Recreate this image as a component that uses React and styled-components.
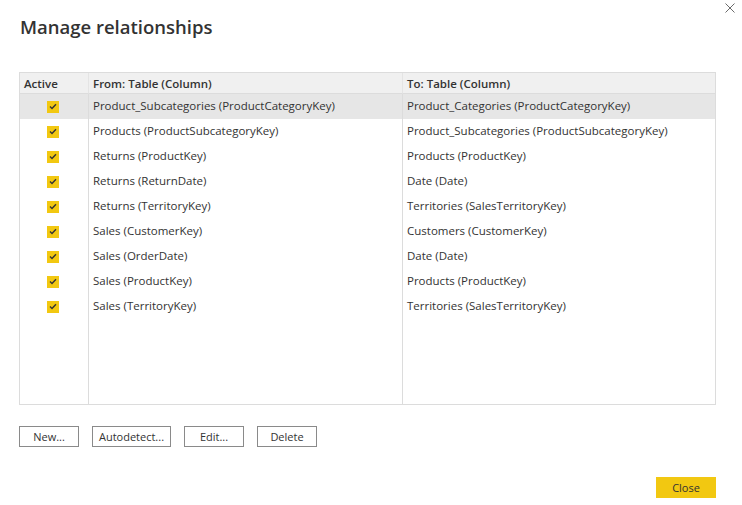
import React from "react";
import styled, { createGlobalStyle } from "styled-components";

const GlobalStyle = createGlobalStyle`
  html, body {
    margin: 0;
    padding: 0;
    background: #ffffff;
  }
  body {
    font-family: "Open Sans", "Noto Sans", sans-serif;
    color: #333333;
  }
`;

const relationships = [
  { from: "Product_Subcategories (ProductCategoryKey)", to: "Product_Categories (ProductCategoryKey)", selected: true },
  { from: "Products (ProductSubcategoryKey)", to: "Product_Subcategories (ProductSubcategoryKey)" },
  { from: "Returns (ProductKey)", to: "Products (ProductKey)" },
  { from: "Returns (ReturnDate)", to: "Date (Date)" },
  { from: "Returns (TerritoryKey)", to: "Territories (SalesTerritoryKey)" },
  { from: "Sales (CustomerKey)", to: "Customers (CustomerKey)" },
  { from: "Sales (OrderDate)", to: "Date (Date)" },
  { from: "Sales (ProductKey)", to: "Products (ProductKey)" },
  { from: "Sales (TerritoryKey)", to: "Territories (SalesTerritoryKey)" },
];

const Dialog = styled.div`
  position: relative;
  width: 742px;
  height: 505px;
  box-sizing: border-box;
  padding: 14px 26px 0 19px;
  display: flex;
  flex-direction: column;
`;

const CloseX = styled.button`
  position: absolute;
  top: 1px;
  right: 5px;
  width: 14px;
  height: 14px;
  padding: 0;
  border: none;
  background: none;
  display: flex;
  align-items: center;
  justify-content: center;
`;

const Title = styled.h1`
  margin: 0 0 0 1px;
  font-size: 18.5px;
  font-weight: 600;
  line-height: 26px;
  color: #333333;
`;

const Grid = styled.div`
  margin-top: 32px;
  height: 333px;
  box-sizing: border-box;
  border: 1px solid #dcdcdc;
  display: grid;
  grid-template-columns: 68px 314px 1fr;
  grid-template-rows: 21px repeat(9, 25px) 1fr;
  font-size: 11.5px;
`;

const HeadCell = styled.div`
  background: #f0f0f0;
  border-bottom: 1px solid #dcdcdc;
  border-left: ${({ $first }) => ($first ? "none" : "1px solid #e4e4e4")};
  font-weight: 600;
  display: flex;
  align-items: center;
  padding-left: 4px;
  color: #333333;
`;

const Cell = styled.div`
  background: ${({ $selected }) => ($selected ? "#e6e6e6" : "#ffffff")};
  border-left: ${({ $first }) => ($first ? "none" : "1px solid #dcdcdc")};
  display: flex;
  align-items: center;
  justify-content: ${({ $center }) => ($center ? "center" : "flex-start")};
  padding-left: ${({ $center }) => ($center ? "0" : "4px")};
  padding-bottom: ${({ $center }) => ($center ? "0" : "2px")};
  color: #333333;
  white-space: nowrap;
`;

const Check = styled.span`
  width: 12px;
  height: 12px;
  background: #f2c811;
  display: flex;
  align-items: center;
  justify-content: center;
  margin-right: 3px;
`;

const Footer = styled.div`
  display: flex;
  gap: 13px;
  margin-top: 21px;
`;

const Button = styled.button`
  width: ${({ $w }) => $w || 60}px;
  height: 21px;
  box-sizing: border-box;
  border: 1px solid #8a8a8a;
  background: #ffffff;
  font-family: "Open Sans", "Noto Sans", sans-serif;
  font-size: 11px;
  color: #333333;
  padding: 0;
`;

const Bottom = styled.div`
  display: flex;
  justify-content: flex-end;
  margin-top: 30px;
`;

const PrimaryButton = styled(Button)`
  background: #f2c811;
  border-color: #f2c811;
`;

const CheckMark = () => (
  <Check>
    <svg width="8" height="7" viewBox="0 0 8 7">
      <path d="M1 3.6 L3 5.5 L7 1.2" fill="none" stroke="#333" strokeWidth="1.4" />
    </svg>
  </Check>
);

export default function App() {
  return (
    <>
      <GlobalStyle />
      <Dialog>
        <CloseX aria-label="Close">
          <svg width="10" height="10" viewBox="0 0 10 10">
            <path d="M0.5 0.5 L9.5 9.5 M9.5 0.5 L0.5 9.5" stroke="#6a6a6a" strokeWidth="1" />
          </svg>
        </CloseX>
        <Title>Manage relationships</Title>
        <Grid>
          <HeadCell $first>Active</HeadCell>
          <HeadCell>From: Table (Column)</HeadCell>
          <HeadCell>To: Table (Column)</HeadCell>
          {relationships.map((r) => (
            <React.Fragment key={r.from}>
              <Cell $first $center $selected={r.selected}>
                <CheckMark />
              </Cell>
              <Cell $selected={r.selected}>{r.from}</Cell>
              <Cell $selected={r.selected}>{r.to}</Cell>
            </React.Fragment>
          ))}
          <Cell $first />
          <Cell />
          <Cell />
        </Grid>
        <Footer>
          <Button>New...</Button>
          <Button $w={79}>Autodetect...</Button>
          <Button>Edit...</Button>
          <Button>Delete</Button>
        </Footer>
        <Bottom>
          <PrimaryButton>Close</PrimaryButton>
        </Bottom>
      </Dialog>
    </>
  );
}
